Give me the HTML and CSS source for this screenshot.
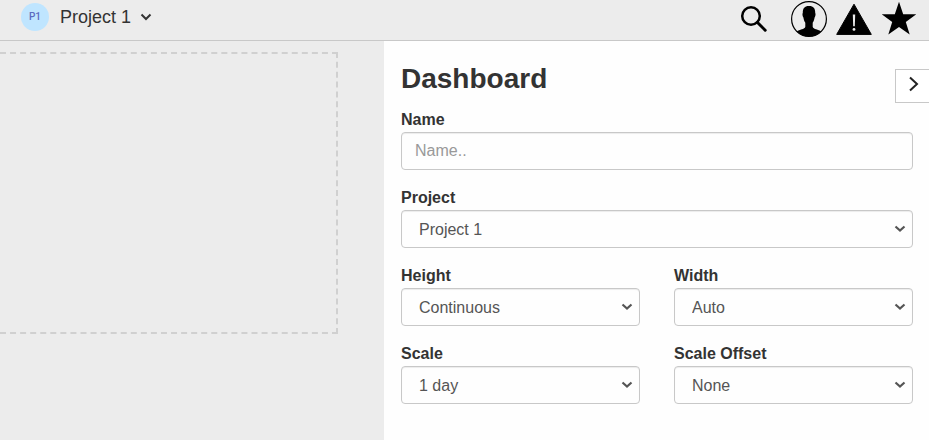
FILE: index.html
```html
<!DOCTYPE html>
<html lang="en">
<head>
    <meta charset="UTF-8">
    <meta name="viewport" content="width=device-width, initial-scale=1">
    <title>Dashboard</title>
    <link rel="stylesheet" href="styles.css">
</head>
<body>
<header class="topbar">
    <div class="project-switch">
        <span class="avatar">P1</span>
        <select class="project-select" aria-label="Current project">
            <option>Project 1</option>
        </select>
    </div>
    <nav class="tools">
        <button type="button" class="tool tool-search" aria-label="Search">
            <svg width="28" height="28" viewBox="0 0 28 28">
                <circle cx="11" cy="11" r="8.8" fill="none" stroke="#000" stroke-width="2.5"></circle>
                <path d="M17.5 17.5L25.2 25.2" stroke="#000" stroke-width="3" stroke-linecap="round"></path>
            </svg>
        </button>
        <button type="button" class="tool" aria-label="Account">
            <svg width="36" height="36" viewBox="0 0 36 36">
                <circle cx="18" cy="18" r="17.4" fill="none" stroke="#000" stroke-width="1.2"></circle>
                <path d="M18 5C22.2 4.8 24.4 7.4 24.2 12C24.8 12.4 24.6 15.4 23.6 16.4C23.3 18.6 22.6 20.6 21.7 21.8V25.8C22.4 28.6 27.4 28.4 30.4 30.4A17.5 17.5 0 0 1 5.6 30.4C8.6 28.4 13.6 28.6 14.3 25.8V21.8C13.4 20.6 12.7 18.6 12.4 16.4C11.4 15.4 11.2 12.4 11.8 12C11.6 7.4 13.8 4.8 18 5z"></path>
            </svg>
        </button>
        <button type="button" class="tool" aria-label="Warnings">
            <svg width="36" height="36" viewBox="0 0 36 36">
                <path d="M18 3.2L35.3 33.4H.7z" stroke="#000" stroke-linejoin="round"></path>
                <path d="M16.8 13.6H19.2L18.8 25.2H17.2z" fill="#ececec"></path>
                <circle cx="18" cy="28.4" r="1.4" fill="#ececec"></circle>
            </svg>
        </button>
        <button type="button" class="tool" aria-label="Favorites">
            <svg width="36" height="36" viewBox="0 0 36 36">
                <path d="M18 .8L22.2 13.2H35.3L24.8 21.1L28.7 33.6L18 26L7.3 33.6L11.2 21.1L.7 13.2H13.8z"></path>
            </svg>
        </button>
    </nav>
</header>
<main class="workspace">
    <section class="canvas">
        <div class="drop-zone"></div>
    </section>
    <aside class="panel">
        <div class="panel-head">
            <h1>Dashboard</h1>
            <button type="button" class="collapse" aria-label="Close panel">
                <svg width="12" height="16" viewBox="0 0 12 16">
                    <path d="M2 1.5L9 8L2 14.5" fill="none" stroke="#222" stroke-width="2"></path>
                </svg>
            </button>
        </div>
        <form class="fields">
            <div class="field field-wide">
                <label for="name">Name</label>
                <input type="text" id="name" class="control" placeholder="Name..">
            </div>
            <div class="field field-wide">
                <label for="project">Project</label>
                <select id="project" class="control">
                    <option>Project 1</option>
                </select>
            </div>
            <div class="field">
                <label for="height">Height</label>
                <select id="height" class="control">
                    <option>Continuous</option>
                </select>
            </div>
            <div class="field">
                <label for="width">Width</label>
                <select id="width" class="control">
                    <option>Auto</option>
                </select>
            </div>
            <div class="field">
                <label for="scale">Scale</label>
                <select id="scale" class="control">
                    <option>1 day</option>
                </select>
            </div>
            <div class="field">
                <label for="offset">Scale Offset</label>
                <select id="offset" class="control">
                    <option>None</option>
                </select>
            </div>
        </form>
    </aside>
</main>
</body>
</html>
```

FILE: styles.css
```css
* {
    box-sizing: border-box;
}

body {
    font-family: "Liberation Sans", Arial, sans-serif;
    font-size: 16px;
    display: flex;
    flex-direction: column;
    min-height: 100vh;
    margin: 0;
    color: #333;
    background-color: #ececec;
}

button,
input,
select {
    font-family: inherit;
}

select {
    appearance: none;
    background-repeat: no-repeat;
}

.topbar {
    display: flex;
    align-items: center;
    justify-content: space-between;
    padding: 1px 12px 3px 21px;
    border-bottom: 1px solid #c8c8c8;
}

.project-switch {
    display: flex;
    align-items: center;
    gap: 11px;
    margin-top: -4px;
}

.avatar {
    font-family: Roboto, sans-serif;
    font-size: 10px;
    font-weight: 500;
    line-height: 28px;
    width: 28px;
    text-align: center;
    color: #5c6bc0;
    border-radius: 50%;
    background-color: #bfe5ff;
}

.project-select {
    font-size: 18px;
    height: 30px;
    padding: 0 20px 0 0;
    color: #333;
    border: 0;
    background-color: transparent;
    background-image: url("data:image/svg+xml,%3Csvg xmlns='http://www.w3.org/2000/svg' width='12' height='8'%3E%3Cpath d='M1.5 1.5L6 6L10.5 1.5' fill='none' stroke='%23333' stroke-width='2'/%3E%3C/svg%3E");
    background-position: right 0 center;
}

.tools {
    display: flex;
    align-items: center;
    gap: 9px;
}

.tool {
    display: flex;
    padding: 0;
    cursor: pointer;
    border: 0;
    background: none;
}

.tool-search {
    margin-right: 14px;
}

.workspace {
    display: flex;
    flex: 1;
}

.canvas {
    flex: 1;
    padding: 11px 46px 0 0;
}

.drop-zone {
    height: 282px;
    border: 2px dashed #d0d0d0;
    border-left: 0;
}

.panel {
    flex: 0 0 545px;
    padding: 20px 16px 16px 17px;
    background-color: #fefefe;
}

.panel-head {
    display: flex;
    align-items: flex-start;
    justify-content: space-between;
    height: 48px;
    margin-right: -16px;
}

h1 {
    font-size: 28px;
    line-height: 36px;
    margin: 0;
}

.collapse {
    display: flex;
    align-items: center;
    justify-content: center;
    width: 34px;
    height: 34px;
    margin-top: 8px;
    padding: 0 0 4px 3px;
    cursor: pointer;
    border: 1px solid #c8c8c8;
    border-right: 0;
    background-color: #fff;
}

.fields {
    display: grid;
    grid-template-columns: 1fr 1fr;
    gap: 17px 34px;
}

.field-wide {
    grid-column: 1 / -1;
}

.field label {
    font-weight: bold;
    line-height: 22px;
    display: block;
    padding-bottom: 1px;
}

.control {
    font-size: 16px;
    display: block;
    width: 100%;
    height: 38px;
    padding: 0 13px;
    color: #555;
    border: 1px solid #c8c8c8;
    border-radius: 4px;
    background-color: #fefefe;
    box-shadow: inset 0 1px 1px rgba(0, 0, 0, 0.075);
}

select.control {
    padding: 0 24px 0 17px;
    background-image: url("data:image/svg+xml,%3Csvg xmlns='http://www.w3.org/2000/svg' width='12' height='8'%3E%3Cpath d='M1.5 1.5L6 5.5L10.5 1.5' fill='none' stroke='%23555' stroke-width='2.2'/%3E%3C/svg%3E");
    background-position: right 6px center;
}

.control::placeholder {
    color: #999;
}
```
